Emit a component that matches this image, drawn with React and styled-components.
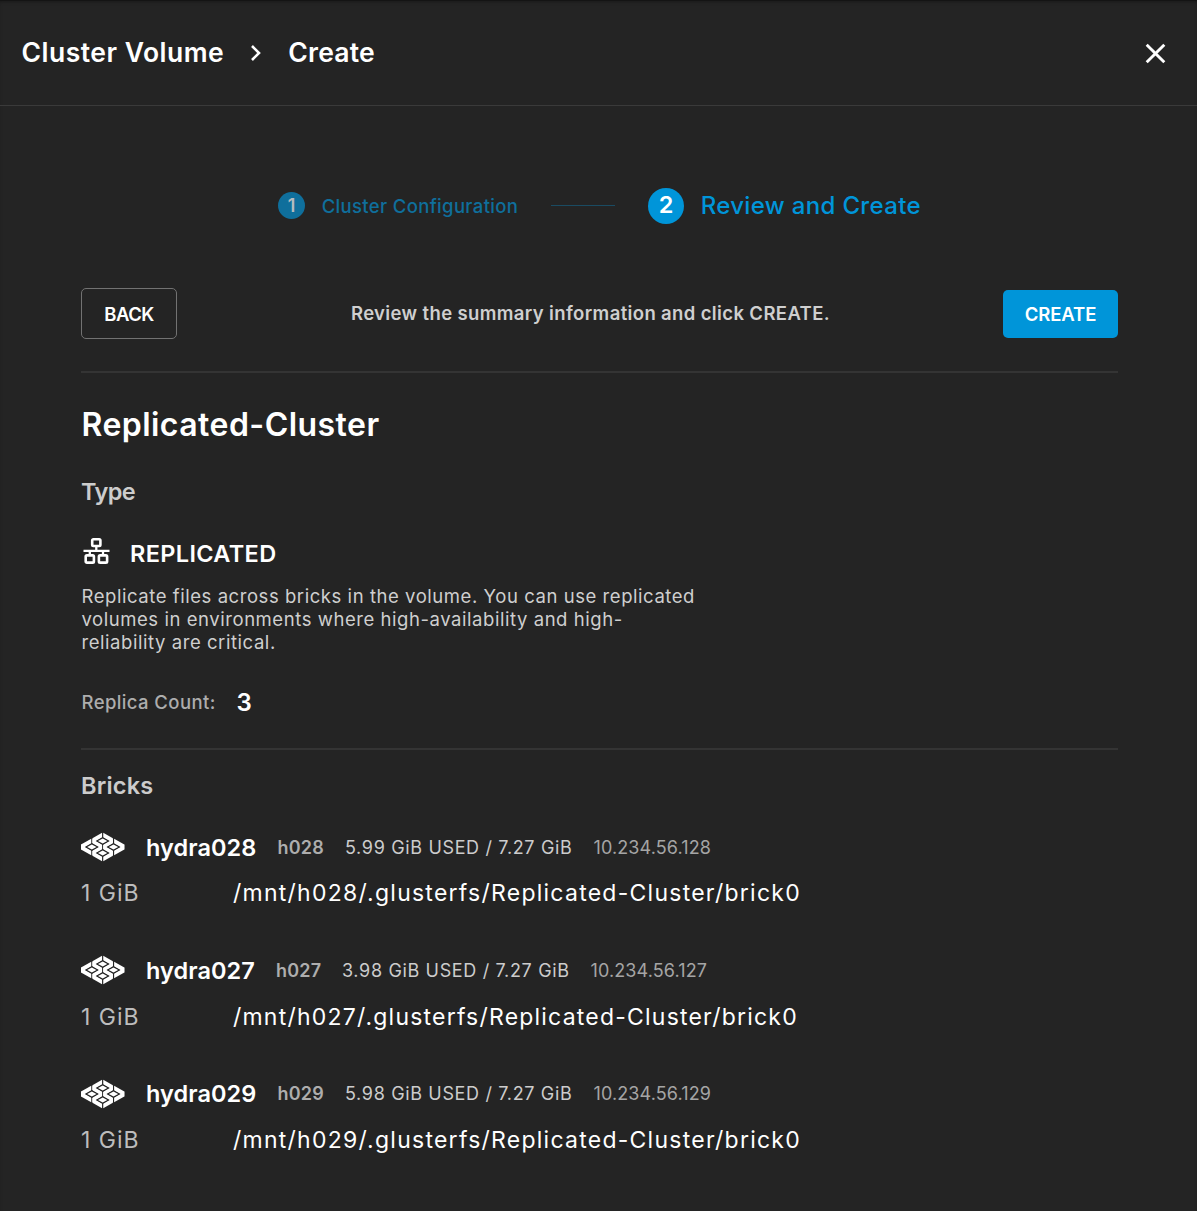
import React from 'react';
import styled, { createGlobalStyle } from 'styled-components';

const colors = {
  page: '#242424',
  accent: '#0095d9',
  accentDim: '#0f6f9c',
  line: '#343434',
};

const GlobalStyle = createGlobalStyle`
  *, *::before, *::after { box-sizing: border-box; }
  body {
    margin: 0;
    background: ${colors.page};
    color: #fff;
    font-family: Inter, "Open Sans", sans-serif;
  }
  h1, h2, h3, p { margin: 0; font-weight: inherit; }
`;

const Page = styled.div`
  height: 1211px;
  overflow: hidden;
  background: ${colors.page};
  box-shadow: inset 0 1px 0 #141414, inset 0 3px 4px -2px rgba(0, 0, 0, 0.45);
`;

const Header = styled.header`
  display: flex;
  align-items: center;
  height: 106px;
  padding: 0 31px 1px 21.5px;
  border-bottom: 1px solid #3a3a3a;
`;

const Crumb = styled.h1`
  font-size: 26.5px;
  line-height: 32px;
  font-weight: 600;
  letter-spacing: ${(p) => p.$spacing}px;
  white-space: nowrap;
`;

const CrumbArrow = styled.svg`
  width: 12px;
  height: 18px;
  margin: 1px 26px 0 26px;
`;

const CloseButton = styled.button`
  display: flex;
  margin: 2px 0 0 auto;
  padding: 0;
  border: 0;
  background: none;
`;

const Main = styled.main`
  padding: 80px 79px 0 81px;
`;

const Steps = styled.div`
  display: flex;
  align-items: center;
  height: 39px;
  padding-left: 197px;
`;

const StepNumber = styled.span`
  display: flex;
  align-items: center;
  justify-content: center;
  width: ${(p) => p.$size}px;
  height: ${(p) => p.$size}px;
  padding-bottom: ${(p) => (p.$active ? 2 : 0)}px;
  border-radius: 50%;
  background: ${(p) => (p.$active ? colors.accent : colors.accentDim)};
  color: ${(p) => (p.$active ? '#fff' : '#b5bcc0')};
  font-size: ${(p) => (p.$active ? 23.5 : 18)}px;
  font-weight: 600;
`;

const StepLabel = styled.span`
  padding-left: 16.7px;
  width: ${(p) => p.$width}px;
  color: ${(p) => (p.$active ? colors.accent : colors.accentDim)};
  font-size: ${(p) => (p.$active ? 24 : 18.5)}px;
  font-weight: 500;
  letter-spacing: 0.34px;
  white-space: nowrap;
`;

const StepLine = styled.span`
  width: 64px;
  height: 1px;
  margin: 0 33px 0 32px;
  background: #1a4b62;
`;

const Actions = styled.div`
  display: flex;
  align-items: center;
  justify-content: space-between;
  height: 51px;
  margin-top: 63px;
`;

const Button = styled.button`
  width: ${(p) => (p.$primary ? 115 : 96)}px;
  height: ${(p) => (p.$primary ? 48 : 51)}px;
  padding: 0;
  border: ${(p) => (p.$primary ? '0' : '1px solid #727272')};
  border-radius: 5px;
  background: ${(p) => (p.$primary ? colors.accent : 'transparent')};
  color: #fff;
  font-family: inherit;
  font-size: 18.5px;
  font-weight: 600;
  letter-spacing: ${(p) => (p.$primary ? -0.1 : -0.5)}px;
`;

const Message = styled.p`
  padding: 0 0 1px 1px;
  color: #cfcfcf;
  font-size: 18.5px;
  font-weight: 600;
  letter-spacing: 0.37px;
  white-space: nowrap;
`;

const Divider = styled.div`
  height: 2px;
  margin-top: ${(p) => p.$top}px;
  background: ${colors.line};
`;

const VolumeName = styled.h2`
  margin-top: 32px;
  padding-left: 0.5px;
  font-size: 32px;
  line-height: 40px;
  font-weight: 600;
  letter-spacing: 0.45px;
`;

const SectionTitle = styled.h3`
  margin-top: ${(p) => p.$top}px;
  color: #cccccc;
  font-size: 23.5px;
  line-height: 30px;
  font-weight: 600;
  letter-spacing: ${(p) => p.$spacing}px;
`;

const TypeRow = styled.div`
  display: flex;
  align-items: center;
  height: 30px;
  margin-top: 31px;
  padding-left: 2px;
`;

const TypeIcon = styled.svg`
  width: 27px;
  height: 28px;
  margin: 0 20px 5px 0;
`;

const TypeName = styled.span`
  font-size: 23.5px;
  font-weight: 600;
  letter-spacing: 0.35px;
`;

const Description = styled.p`
  width: 640px;
  margin-top: 17px;
  padding-left: 0.5px;
  color: #cfcfcf;
  font-size: 18.5px;
  line-height: 23px;
  letter-spacing: 0.555px;
  white-space: pre-line;
`;

const CountRow = styled.div`
  display: flex;
  align-items: center;
  height: 30px;
  margin-top: 33px;
`;

const CountLabel = styled.span`
  width: 155.5px;
  padding-left: 0.5px;
  color: #adadad;
  font-size: 18.5px;
  font-weight: 500;
  letter-spacing: 0.4px;
`;

const CountValue = styled.span`
  font-size: 24px;
  font-weight: 600;
`;

const BrickList = styled.div`
  display: flex;
  flex-direction: column;
  gap: 47px;
  margin-top: 31px;
`;

const Brick = styled.section`
  display: flex;
  flex-direction: column;
  gap: 16.3px;
`;

const BrickLine = styled.div`
  display: flex;
  align-items: center;
  height: 30px;
  white-space: nowrap;
`;

const BrickIcon = styled.svg`
  width: 44px;
  height: 30px;
`;

const HostName = styled.span`
  margin-left: 21px;
  width: ${(p) => p.$width}px;
  font-size: 23.5px;
  font-weight: 600;
  letter-spacing: 0.06px;
`;

const PeerName = styled.span`
  width: ${(p) => p.$width}px;
  color: #adadad;
  font-size: 18px;
  font-weight: 600;
  letter-spacing: 0.2px;
`;

const Usage = styled.span`
  width: 248.5px;
  color: #cccccc;
  font-size: 18px;
  letter-spacing: 0.65px;
`;

const Address = styled.span`
  color: #a5a5a5;
  font-size: 18px;
  letter-spacing: 0.12px;
`;

const BrickSize = styled.span`
  width: 152px;
  color: #bdbdbd;
  font-size: 23px;
  letter-spacing: 1px;
`;

const BrickPath = styled.span`
  font-size: 23px;
  letter-spacing: ${(p) => p.$spacing}px;
`;

/* Iso grid of a 2x2 block: vertices sit 32.5 units apart across and 18 down. */
const vertex = (c, r) => [65 + (c - r) * 32.5, 9 + (c + r) * 18];
const walls = [];
for (let r = 0; r < 3; r += 1) {
  for (let c = 0; c < 3; c += 1) {
    if (c < 2) walls.push([vertex(c, r), vertex(c + 1, r)]);
    if (r < 2) walls.push([vertex(c, r), vertex(c, r + 1)]);
  }
}
const wallPoints = ([[x1, y1], [x2, y2]]) => {
  const isSide = (x) => x < 1 || x > 129;
  const cut = (x) => (isSide(x) ? 0 : 0.055);
  const ax = x1 + (x2 - x1) * cut(x1);
  const ay = y1 + (y2 - y1) * cut(x1);
  const bx = x2 - (x2 - x1) * cut(x2);
  const by = y2 - (y2 - y1) * cut(x2);
  const h = 7.6;
  return `${ax},${ay - h} ${bx},${by - h} ${bx},${by + h} ${ax},${ay + h}`;
};
const cells = [[0, 0], [1, 0], [0, 1], [1, 1]].map(([c, r]) => {
  const [x, y] = vertex(c, r);
  return [x, y + 18];
});
const diamond = (x, y, w, h) => `${x},${y - h} ${x + w},${y} ${x},${y + h} ${x - w},${y}`;

const BlockGlyph = () => (
  <BrickIcon viewBox="0 0 132 90" fill="#fff">
    {walls.map((w) => (
      <polygon key={wallPoints(w)} points={wallPoints(w)} />
    ))}
    {cells.map(([x, y]) => (
      <g key={`${x}-${y}`}>
        <polygon points={diamond(x, y, 21, 11.7)} fill={colors.page} />
        <polygon points={diamond(x, y, 14, 7.8)} />
      </g>
    ))}
  </BrickIcon>
);

const bricks = [
  { host: 'hydra028', peer: 'h028', used: '5.99', ip: '10.234.56.128', hostWidth: 131.5, peerWidth: 67.5, spacing: 1.25 },
  { host: 'hydra027', peer: 'h027', used: '3.98', ip: '10.234.56.127', hostWidth: 130, peerWidth: 66, spacing: 1.21 },
  { host: 'hydra029', peer: 'h029', used: '5.98', ip: '10.234.56.129', hostWidth: 131.5, peerWidth: 67.5, spacing: 1.25 },
];

export default function App() {
  return (
    <>
      <GlobalStyle />
      <Page>
        <Header>
          <Crumb $spacing={0.5}>Cluster Volume</Crumb>
          <CrumbArrow viewBox="0 0 12 18" fill="none" stroke="#fff" strokeWidth="2.6">
            <path d="M2 2l7 7-7 7" />
          </CrumbArrow>
          <Crumb $spacing={0.2}>Create</Crumb>
          <CloseButton aria-label="Close">
            <svg width="21" height="21" viewBox="0 0 21 21" stroke="#fff" strokeWidth="2.9">
              <path d="M1.7 1.7l17.6 17.6M19.3 1.7L1.7 19.3" />
            </svg>
          </CloseButton>
        </Header>
        <Main>
          <Steps>
            <StepNumber $size={27}>1</StepNumber>
            <StepLabel $width={214}>Cluster Configuration</StepLabel>
            <StepLine />
            <StepNumber $size={36} $active>2</StepNumber>
            <StepLabel $width={246} $active>Review and Create</StepLabel>
          </Steps>
          <Actions>
            <Button>BACK</Button>
            <Message>Review the summary information and click CREATE.</Message>
            <Button $primary>CREATE</Button>
          </Actions>
          <Divider $top={32} />
          <VolumeName>Replicated-Cluster</VolumeName>
          <SectionTitle $top={32} $spacing={-0.6}>Type</SectionTitle>
          <TypeRow>
            <TypeIcon viewBox="0 0 27 28" fill="none" stroke="#fff" strokeWidth="2.6">
              <rect x="9.2" y="2.2" width="8.2" height="6.8" rx="1.2" />
              <path d="M13.3 9v4M0.5 13.8h26M6.8 14v4.4M20 14v4.4" strokeWidth="2.3" />
              <rect x="2.7" y="18.4" width="8.2" height="7.2" rx="1.2" />
              <rect x="15.9" y="18.4" width="8.2" height="7.2" rx="1.2" />
            </TypeIcon>
            <TypeName>REPLICATED</TypeName>
          </TypeRow>
          <Description>
            {'Replicate files across bricks in the volume. You can use replicated\nvolumes in environments where high-availability and high-\nreliability are critical.'}
          </Description>
          <CountRow>
            <CountLabel>Replica Count:</CountLabel>
            <CountValue>3</CountValue>
          </CountRow>
          <Divider $top={31} />
          <SectionTitle $top={21} $spacing={0.22}>Bricks</SectionTitle>
          <BrickList>
            {bricks.map((b) => (
              <Brick key={b.host}>
                <BrickLine>
                  <BlockGlyph />
                  <HostName $width={b.hostWidth}>{b.host}</HostName>
                  <PeerName $width={b.peerWidth}>{b.peer}</PeerName>
                  <Usage>{`${b.used} GiB USED / 7.27 GiB`}</Usage>
                  <Address>{b.ip}</Address>
                </BrickLine>
                <BrickLine>
                  <BrickSize>1 GiB</BrickSize>
                  <BrickPath $spacing={b.spacing}>{`/mnt/${b.peer}/.glusterfs/Replicated-Cluster/brick0`}</BrickPath>
                </BrickLine>
              </Brick>
            ))}
          </BrickList>
        </Main>
      </Page>
    </>
  );
}
